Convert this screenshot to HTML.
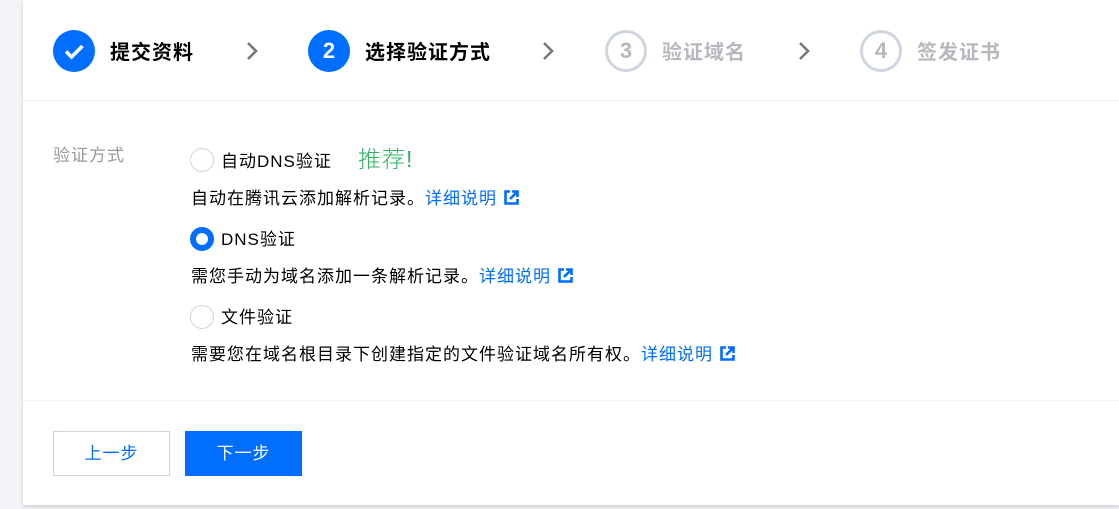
<!DOCTYPE html>
<html><head><meta charset="utf-8"><style>
*{margin:0;padding:0;box-sizing:border-box}
body{width:1119px;height:509px;background:#f3f4f7;font-family:"Liberation Sans","Noto Sans CJK SC",sans-serif;position:relative;overflow:hidden}
.card{position:absolute;left:23px;top:0;width:1096px;height:505px;background:#fff;box-shadow:0 2px 4px rgba(0,0,0,.15)}
.a{position:absolute}
.hd{position:absolute;left:0;top:0;width:100%;height:101px;border-bottom:1px solid #eef0f3}
.c{position:absolute;top:30px;width:42px;height:42px;border-radius:50%;text-align:center;line-height:42px;font-size:22px;font-weight:bold}
.cb{background:#006eff;color:#fff}
.cg{border:3px solid #d0d6e0;color:#b5b8be;line-height:36px}
.st{position:absolute;top:41px;font-size:20px;font-weight:bold;line-height:24px;letter-spacing:1px}
.chev{position:absolute;top:41px}
.t{position:absolute;font-size:17px;letter-spacing:1px;color:#000;line-height:20px;white-space:nowrap}
.lnk{color:#006eff}
.t svg{vertical-align:-1px;margin-left:7px}
.r{position:absolute;left:167px;width:24px;height:24px;border-radius:50%;border:1px solid #cfd5de}
.ft{position:absolute;left:0;top:400px;width:100%;border-top:1px solid #eef0f3}
.btn{position:absolute;top:431px;width:117px;height:45px;font-size:17px;letter-spacing:1px;text-align:center;line-height:45px}
</style></head><body>
<div class="card">
<div class="hd">
 <div class="c cb" style="left:30px"><svg width="42" height="42" viewBox="0 0 42 42" style="position:absolute;left:0;top:0"><path d="M13 21.5l5.5 5.5L29.5 16" stroke="#fff" stroke-width="3.6" fill="none"/></svg></div>
 <div class="st" style="left:87px;color:#000">提交资料</div>
 <svg class="chev" style="left:222px" width="14" height="20" viewBox="0 0 14 20"><path d="M3 2l8 8-8 8" stroke="#777" stroke-width="2.6" fill="none"/></svg>
 <div class="c cb" style="left:285px">2</div>
 <div class="st" style="left:342px;color:#000">选择验证方式</div>
 <svg class="chev" style="left:518px" width="14" height="20" viewBox="0 0 14 20"><path d="M3 2l8 8-8 8" stroke="#777" stroke-width="2.6" fill="none"/></svg>
 <div class="c cg" style="left:582px">3</div>
 <div class="st" style="left:639px;color:#b5b8be">验证域名</div>
 <svg class="chev" style="left:774px" width="14" height="20" viewBox="0 0 14 20"><path d="M3 2l8 8-8 8" stroke="#777" stroke-width="2.6" fill="none"/></svg>
 <div class="c cg" style="left:837px">4</div>
 <div class="st" style="left:894px;color:#b5b8be">签发证书</div>
</div>
<div class="t" style="left:30px;top:146px;color:#999">验证方式</div>
<div class="r" style="top:148px"></div>
<div class="t" style="left:198px;top:152px">自动DNS验证</div>
<div class="t" style="left:335px;top:145px;color:#29b55f;font-size:23px;line-height:28px;font-weight:300">推荐!</div>
<div class="t" style="left:168px;top:189px">自动在腾讯云添加解析记录。<span class="lnk">详细说明</span><svg width="15" height="15" viewBox="0 0 15 15"><path d="M6 1.5H1.5v12h12V9" stroke="#006eff" stroke-width="2.6" fill="none"/><path d="M6 9l7-7M8 1.5h5.5V7" stroke="#006eff" stroke-width="2.6" fill="none"/></svg></div>
<div class="r" style="top:227px;border:6px solid #006eff"></div>
<div class="t" style="left:198px;top:230px">DNS验证</div>
<div class="t" style="left:168px;top:267px">需您手动为域名添加一条解析记录。<span class="lnk">详细说明</span><svg width="15" height="15" viewBox="0 0 15 15"><path d="M6 1.5H1.5v12h12V9" stroke="#006eff" stroke-width="2.6" fill="none"/><path d="M6 9l7-7M8 1.5h5.5V7" stroke="#006eff" stroke-width="2.6" fill="none"/></svg></div>
<div class="r" style="top:305px"></div>
<div class="t" style="left:198px;top:308px">文件验证</div>
<div class="t" style="left:168px;top:345px">需要您在域名根目录下创建指定的文件验证域名所有权。<span class="lnk">详细说明</span><svg width="15" height="15" viewBox="0 0 15 15"><path d="M6 1.5H1.5v12h12V9" stroke="#006eff" stroke-width="2.6" fill="none"/><path d="M6 9l7-7M8 1.5h5.5V7" stroke="#006eff" stroke-width="2.6" fill="none"/></svg></div>
<div class="ft"></div>
<div class="btn" style="left:30px;border:1px solid #cfd5de;color:#006eff;line-height:43px">上一步</div>
<div class="btn" style="left:162px;background:#006eff;color:#fff">下一步</div>
</div>
</body></html>
